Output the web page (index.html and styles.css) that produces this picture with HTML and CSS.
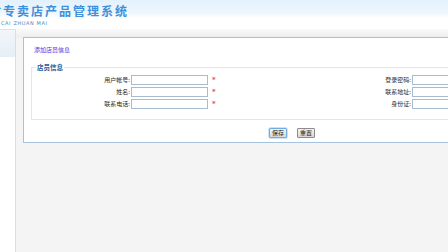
FILE: index.html
```html
<!DOCTYPE html>
<html lang="zh-CN">
<head>
<meta charset="utf-8">
<title>店员信息</title>
<link rel="stylesheet" href="styles.css">
</head>
<body>
<div class="header">
  <div class="title">材专卖店产品管理系统</div>
  <div class="subtitle">CAI ZHUAN MAI</div>
</div>
<div class="layout">
  <div class="sidebar"><div class="side-head"></div></div>
  <div class="main">
    <div class="panel">
      <a class="add-link" href="#">添加店员信息</a>
      <fieldset class="group">
        <legend class="legend">店员信息</legend>
        <div class="form-grid">
          <label class="lbl">用户帐号:</label>
          <div class="cell"><span class="inp"></span><span class="req">*</span></div>
          <label class="lbl">登录密码:</label>
          <div class="cell"><span class="inp"></span></div>

          <label class="lbl">姓名:</label>
          <div class="cell"><span class="inp"></span><span class="req">*</span></div>
          <label class="lbl">联系地址:</label>
          <div class="cell"><span class="inp"></span></div>

          <label class="lbl">联系电话:</label>
          <div class="cell"><span class="inp"></span><span class="req">*</span></div>
          <label class="lbl">身份证:</label>
          <div class="cell"><span class="inp"></span></div>
        </div>
      </fieldset>
      <div class="actions">
        <button class="btn btn-primary">保存</button>
        <button class="btn">重置</button>
      </div>
    </div>
  </div>
</div>
</body>
</html>
```
FILE: styles.css
```css
html, body {
  margin: 0;
  padding: 0;
  width: 448px;
  height: 252px;
  overflow: hidden;
  background: #f4f4f4;
  font-family: "Noto Sans CJK SC", "Liberation Sans", sans-serif;
}

.header {
  height: 29px;
  background: linear-gradient(to bottom, #e3f1fc 0%, #eef7fd 45%, #ffffff 62%, #ffffff 100%);
  overflow: hidden;
  white-space: nowrap;
}

.title {
  margin-left: -11px;
  padding-top: 3px;
  font-size: 12px;
  line-height: 15px;
  font-weight: bold;
  letter-spacing: 2px;
  color: #3e8fdc;
}

.subtitle {
  margin-left: 1px;
  margin-top: 2px;
  font-family: "DejaVu Sans", sans-serif;
  font-size: 5px;
  line-height: 7px;
  letter-spacing: 0.6px;
  color: #4a86c6;
}

.layout {
  display: flex;
  height: 223px;
  background: linear-gradient(to bottom, #fafafa 0px, #eeeeee 8px, #f4f4f4 9px);
}

.sidebar {
  width: 15px;
  flex: none;
  background: #ffffff;
  border-right: 1px solid #d6dfe8;
  border-top: 1px solid #dde3ea;
}

.side-head {
  height: 27px;
  background: linear-gradient(to bottom, #f2f6fa, #e6eef6);
}

.main {
  flex: 1;
  padding: 8px 0 0 7px;
  min-width: 0;
}

.panel {
  width: 620px;
  height: 104px;
  background: #ffffff;
  border: 1px solid #a7c2dc;
}

.add-link {
  display: block;
  margin: 8px 0 0 10px;
  font-size: 6px;
  line-height: 8px;
  color: #3d3de0;
  text-decoration: none;
}

.group {
  margin: 9px 0 0 7px;
  padding: 0 0 9px 0;
  border: 1px solid #dde8f2;
  min-width: 0;
}

.legend {
  margin-left: 4px;
  padding: 0 1px;
  font-size: 6.5px;
  line-height: 8px;
  font-weight: bold;
  color: #1d5c9c;
}

.form-grid {
  display: grid;
  grid-template-columns: 99px 249px 32px 1fr;
  grid-auto-rows: 12px;
  padding-top: 3px;
}

.lbl {
  text-align: right;
  padding-right: 1px;
  font-size: 6px;
  line-height: 12px;
  color: #2a2a2a;
  white-space: nowrap;
}

.cell {
  display: flex;
  align-items: center;
}

.inp {
  display: block;
  width: 75px;
  height: 8px;
  border: 1px solid #a9bccf;
  background: #ffffff;
}

.req {
  margin-left: 4px;
  font-family: "DejaVu Sans", sans-serif;
  font-size: 7px;
  font-weight: bold;
  line-height: 6px;
  color: #f04848;
}

.actions {
  display: flex;
  gap: 10px;
  padding: 8px 0 0 245px;
}

.btn {
  margin: 0;
  padding: 0 2px;
  height: 10px;
  font-family: "Noto Sans CJK SC", sans-serif;
  font-size: 6px;
  line-height: 8px;
  color: #222222;
  background: linear-gradient(to bottom, #f2f2f2, #d8d8d8);
  border: 1px solid #8c8c8c;
  border-radius: 1px;
}

.btn-primary {
  border-color: #6aaee6;
  box-shadow: 0 0 0 0.5px #9ccaf0;
}
```
